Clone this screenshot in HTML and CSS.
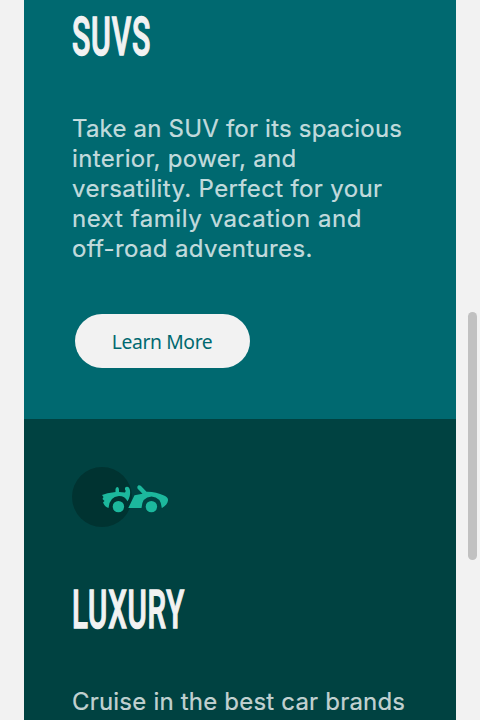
FILE: index.html
```html
<!DOCTYPE html>
<html lang="en">
<head>
<meta charset="utf-8">
<title>Cars</title>
<link rel="stylesheet" href="styles.css">
</head>
<body>
<main class="cards">
  <section class="card suvs">
    <h2><span class="condensed">SUVS</span></h2>
    <p><span class="l1">Take an SUV for its spacious</span><br><span class="l2">interior, power, and</span><br><span class="l3">versatility. Perfect for your</span><br><span class="l4">next family vacation and</span><br><span class="l5">off-road adventures.</span></p>
    <a class="button" href="#"><span>Learn More</span></a>
  </section>
  <section class="card luxury">
    <svg class="icon" width="97" height="60" viewBox="0 0 97 60" aria-hidden="true">
      <circle cx="30" cy="30" r="30" fill="#003331"/>
      <g fill="#1cb89d">
        <path d="M30 28Q35 26 42 25.300L43.500 25V22Q44 20 45.500 20Q47.300 20.500 47 25L53 25.500Q54.500 24 53 22.500Q52.500 20 55 19.800Q57.500 20 58 23.500Q58.800 29 55.500 34.300Q53 29 47 29Q37.500 29.500 36.500 41Q33 40 31 35.500L32.500 34L30.500 32L31.500 30Z"/>
        <path d="M56.300 41L62.500 28.200L70.500 26.800L65.500 21.500Q64.500 19.500 66.500 18.300Q68 18 69.500 19.500L74.500 24.700Q84 24.500 92 28.500Q96.500 30.500 96 33.500Q95.500 37.500 90 41H89.800Q89 30 79.500 29.500Q70 30 69.500 41Z"/>
        <circle cx="46.400" cy="39.600" r="5.700"/>
        <circle cx="79.400" cy="39.600" r="5.700"/>
      </g>
    </svg>
    <h2><span class="condensed wide">LUXURY</span></h2>
    <p><span class="l1">Cruise in the best car brands</span></p>
  </section>
</main>
<div class="scroll-thumb"></div>
</body>
</html>
```
FILE: styles.css
```css
* { box-sizing: border-box; }
html, body { height: 100%; }
body {
  margin: 0;
  overflow: hidden;
  background: #f2f2f2;
}
.cards {
  width: 432px;
  height: 720px;
  margin-left: 24px;
  overflow: hidden;
}
.card { padding: 0 48px; color: #f2f2f2; }
.suvs { height: 419px; background: #006970; }
.luxury { height: 301px; padding-top: 48px; background: #004241; }
h2 {
  margin: 0;
  height: 72px;
  font: 500 53px/74px Roboto, sans-serif;
  white-space: nowrap;
}
.condensed {
  display: inline-block;
  letter-spacing: 1.4px;
  transform: scaleX(.57);
  transform-origin: 0 50%;
  -webkit-text-stroke: 1.4px #f2f2f2;
}
.wide { transform: scaleX(.556); }
p {
  margin: 0;
  font: 400 24px/30px Inter, sans-serif;
  color: rgba(255, 255, 255, .75);
  white-space: nowrap;
  -webkit-text-stroke: .2px;
}
.l1 { letter-spacing: .2px; }
.l2 { letter-spacing: .34px; }
.l3 { letter-spacing: .36px; }
.l4 { letter-spacing: .57px; }
.l5 { letter-spacing: .36px; }
.suvs p { margin-top: 42px; }
.luxury h2 { margin-top: 46px; }
.luxury p { margin-top: 42px; }
.button {
  display: flex;
  align-items: center;
  justify-content: center;
  width: 175px;
  height: 54px;
  margin: 50px 0 0 3px;
  padding-top: 2px;
  border-radius: 27px;
  background: #f2f2f2;
  color: #006970;
  font: 400 20px/24px "Noto Sans", sans-serif;
  text-decoration: none;
}
.button span { letter-spacing: -.4px; transform: scaleX(.965); }
.icon { display: block; }
.scroll-thumb {
  position: absolute;
  left: 468px;
  top: 312px;
  width: 9px;
  height: 248px;
  border-radius: 5px;
  background: #c1c1c1;
}
```
